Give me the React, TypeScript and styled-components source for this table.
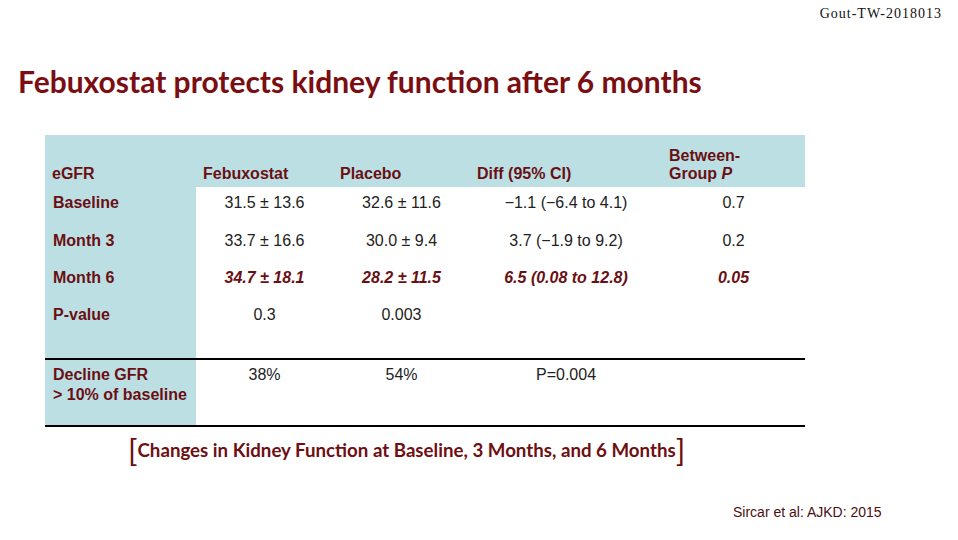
import styled, { createGlobalStyle } from "styled-components";

const Global = createGlobalStyle`
  html, body {
    margin: 0;
    padding: 0;
    background: #fff;
  }
  body {
    width: 958px;
    height: 540px;
    overflow: hidden;
  }
`;

const Slide = styled.div`
  width: 958px;
  height: 540px;
  display: flex;
  flex-direction: column;
  background: #fff;
`;

const DocId = styled.div`
  align-self: flex-end;
  margin: 4px 16px 0 0;
  font-family: "Liberation Serif", "Times New Roman", serif;
  font-size: 14px;
  letter-spacing: 1px;
  line-height: 20px;
  color: #111;
`;

const Title = styled.h1`
  margin: 39px 0 0 18px;
  font-family: "Lato", "Open Sans", sans-serif;
  font-weight: 700;
  font-size: 30px;
  line-height: 36px;
  color: #7a0e12;
`;

const Table = styled.div`
  margin: 36px 0 0 45px;
  width: 760px;
  display: grid;
  grid-template-columns: 151px 137px 137px 192px 143px;
  grid-template-rows: 52px 38px 37px 37px 59px 69px;
  font-family: "Liberation Sans", Arial, sans-serif;
  font-size: 16px;
`;

const Head = styled.div`
  background: #bcdfe3;
  display: flex;
  align-items: flex-end;
  padding: 0 0 4px 7px;
  line-height: 18px;
  font-weight: 700;
  color: #6a0f14;
`;

const Label = styled.div<{ $ruled?: boolean }>`
  background: #bcdfe3;
  padding: 7px 0 0 8px;
  line-height: 18px;
  font-weight: 700;
  color: #6a0f14;
  ${(p) =>
    p.$ruled &&
    `
    border-top: 2px solid #000;
    border-bottom: 2px solid #000;
    padding-top: 5px;
    line-height: 20px;
  `}
`;

const Cell = styled.div<{ $em?: boolean; $ruled?: boolean }>`
  text-align: center;
  padding-top: 7px;
  line-height: 18px;
  color: ${(p) => (p.$em ? "#6a0f14" : "#222")};
  font-weight: ${(p) => (p.$em ? 700 : 400)};
  font-style: ${(p) => (p.$em ? "italic" : "normal")};
  ${(p) =>
    p.$ruled &&
    `
    border-top: 2px solid #000;
    border-bottom: 2px solid #000;
    padding-top: 5px;
    line-height: 20px;
  `}
`;

const Caption = styled.div`
  margin: 6px 0 0 128px;
  display: flex;
  align-items: center;
  font-family: "Lato", "Open Sans", sans-serif;
  font-weight: 700;
  font-size: 18.7px;
  color: #6e0f12;
`;

const Bracket = styled.span`
  font-size: 31px;
  font-weight: 400;
  line-height: 34px;
  color: #6e0f12;
`;

const Source = styled.div`
  margin: 37px 0 0 733px;
  font-family: "Liberation Sans", Arial, sans-serif;
  font-size: 14px;
  color: #4a0f10;
`;

type Row = { label: string; values: string[]; em?: boolean };

const rows: Row[] = [
  { label: "Baseline", values: ["31.5 ± 13.6", "32.6 ± 11.6", "−1.1 (−6.4 to 4.1)", "0.7"] },
  { label: "Month 3", values: ["33.7 ± 16.6", "30.0 ± 9.4", "3.7 (−1.9 to 9.2)", "0.2"] },
  { label: "Month 6", values: ["34.7 ± 18.1", "28.2 ± 11.5", "6.5 (0.08 to 12.8)", "0.05"], em: true },
  { label: "P-value", values: ["0.3", "0.003", "", ""] },
];

export default function App() {
  return (
    <Slide>
      <Global />
      <DocId>Gout-TW-2018013</DocId>
      <Title>Febuxostat protects kidney function after 6 months</Title>
      <Table>
        <Head>eGFR</Head>
        <Head>Febuxostat</Head>
        <Head>Placebo</Head>
        <Head>Diff (95% CI)</Head>
        <Head>
          <span>
            Between-
            <br />
            Group <i>P</i>
          </span>
        </Head>
        {rows.flatMap((r) => [
          <Label key={r.label}>{r.label}</Label>,
          ...r.values.map((v, i) => (
            <Cell key={r.label + i} $em={r.em}>
              {v}
            </Cell>
          )),
        ])}
        <Label $ruled>
          Decline GFR
          <br />
          &gt; 10% of baseline
        </Label>
        <Cell $ruled>38%</Cell>
        <Cell $ruled>54%</Cell>
        <Cell $ruled>P=0.004</Cell>
        <Cell $ruled />
      </Table>
      <Caption>
        <Bracket>[</Bracket>
        Changes in Kidney Function at Baseline, 3 Months, and 6 Months
        <Bracket>]</Bracket>
      </Caption>
      <Source>Sircar et al: AJKD: 2015</Source>
    </Slide>
  );
}
